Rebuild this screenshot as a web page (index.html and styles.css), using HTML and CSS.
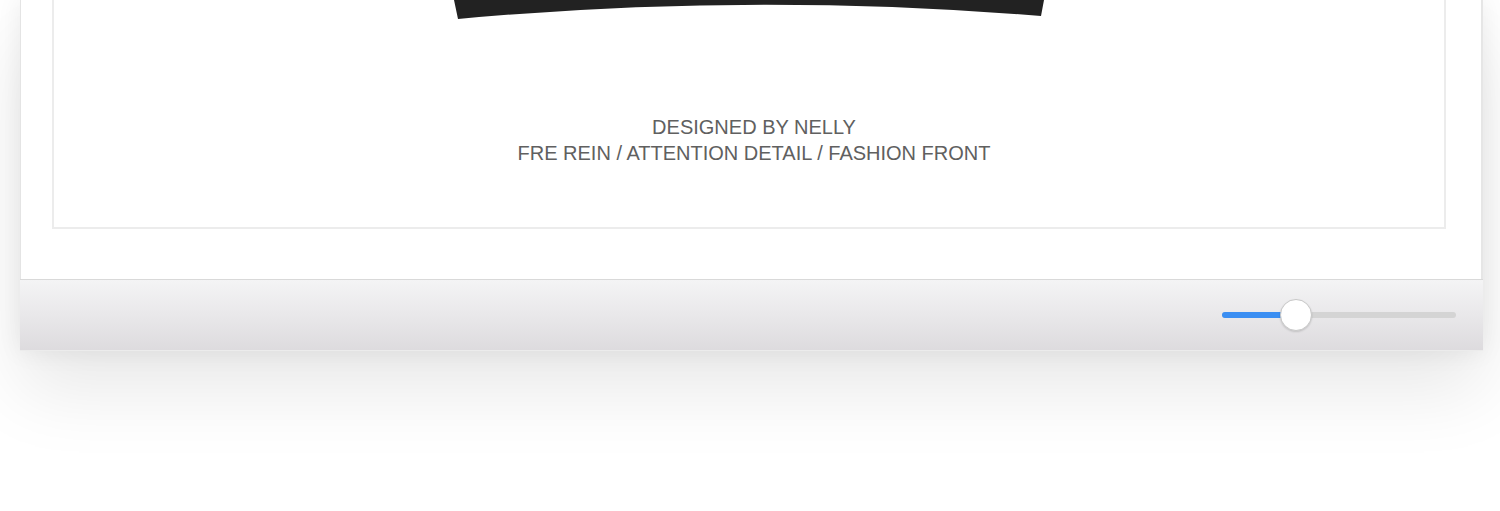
FILE: index.html
```html
<!DOCTYPE html>
<html lang="en">
<head>
    <meta charset="UTF-8">
    <meta name="viewport" content="width=device-width, initial-scale=1.0">
    <title>Poster preview</title>
    <link rel="stylesheet" href="styles.css">
</head>
<body>
    <div class="window">
        <div class="canvas">
            <div class="poster">
                <svg class="garment" width="590" height="20" viewBox="0 0 590 20">
                    <path d="M0 0 H590 L587 16 Q295 -8 4 19 Z" fill="#222"/>
                </svg>
                <div class="credits">
                    <p>DESIGNED BY NELLY</p>
                    <p>FRE REIN / ATTENTION DETAIL / FASHION FRONT</p>
                </div>
            </div>
        </div>
        <div class="toolbar">
            <div class="zoom">
                <div class="zoom-fill"></div>
                <div class="zoom-knob"></div>
            </div>
        </div>
    </div>
</body>
</html>
```

FILE: styles.css
```css
html, body {
    margin: 0;
    background: #fff;
    height: 100%;
    overflow: hidden;
}
body {
    font-family: "Liberation Sans", Arial, sans-serif;
}
.window {
    width: 1463px;
    margin-left: 20px;
    box-shadow: 0 40px 70px rgba(0, 0, 0, 0.09), 0 0 24px rgba(0, 0, 0, 0.07);
}
.canvas {
    background: #fff;
    height: 279px;
    border-left: 1px solid #e4e4e4;
    border-right: 2px solid #e6e6e6;
    box-sizing: border-box;
    padding-left: 31px;
}
.poster {
    width: 1394px;
    height: 229px;
    box-sizing: border-box;
    border: 2px solid #ececec;
    border-top: none;
}
.garment {
    display: block;
    margin: 0 auto;
}
.credits {
    margin-top: 94px;
    text-align: center;
    color: #606060;
    font-size: 20px;
    line-height: 26px;
    padding-left: 10px;
}
.credits p {
    margin: 0;
}
.toolbar {
    height: 70px;
    border-top: 1px solid #d9d9d9;
    border-bottom: 1px solid #ececec;
    background: linear-gradient(#f4f4f5, #e9e8ea 50%, #dddbde);
    display: flex;
    align-items: center;
    justify-content: flex-end;
    padding-right: 27px;
}
.zoom {
    position: relative;
    width: 234px;
    height: 6px;
    border-radius: 3px;
    background: #d4d4d4;
}
.zoom-fill {
    width: 74px;
    height: 6px;
    border-radius: 3px;
    background: #3a8ef2;
}
.zoom-knob {
    position: absolute;
    left: 58px;
    top: -13px;
    width: 32px;
    height: 32px;
    box-sizing: border-box;
    border-radius: 50%;
    background: #fff;
    border: 1px solid #c8c8c8;
    box-shadow: 0 1px 2px rgba(0, 0, 0, 0.15);
}
```
